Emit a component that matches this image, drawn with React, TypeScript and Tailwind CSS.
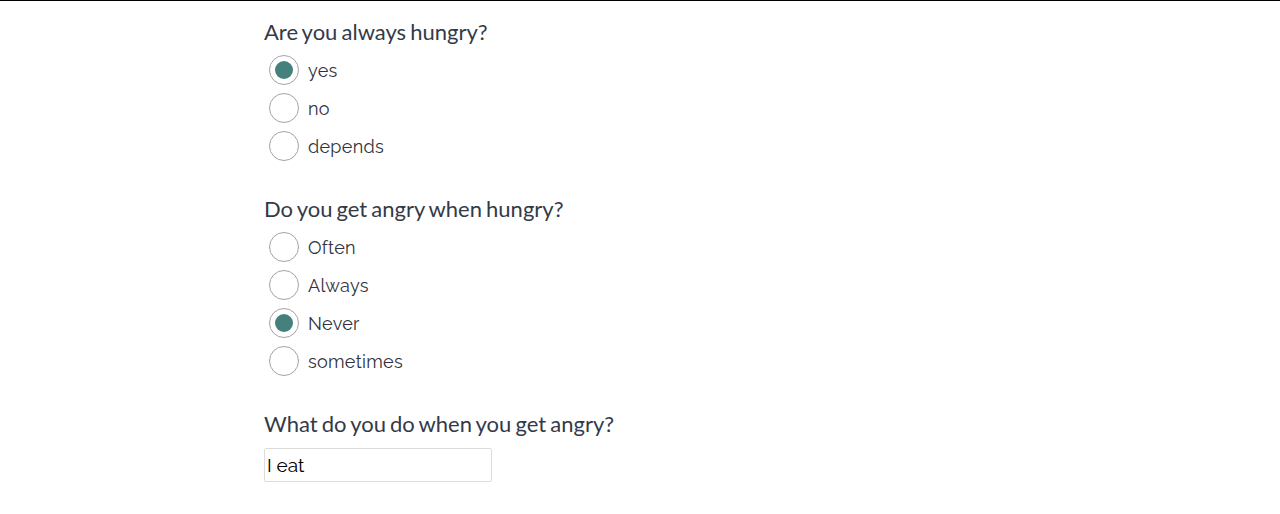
import React, { useState } from 'react';

type Question = {
  id: string;
  title: string;
  options: string[];
  initial: string;
};

const questions: Question[] = [
  { id: 'hungry', title: 'Are you always hungry?', options: ['yes', 'no', 'depends'], initial: 'yes' },
  { id: 'angry', title: 'Do you get angry when hungry?', options: ['Often', 'Always', 'Never', 'sometimes'], initial: 'Never' },
];

const Radio: React.FC<{ label: string; checked: boolean; onSelect: () => void }> = ({ label, checked, onSelect }) => (
  <label className="flex items-center h-[30px] cursor-pointer" onClick={onSelect}>
    <span className="ml-[5px] w-[30px] h-[30px] rounded-full border border-[#a3a3a3] bg-white flex items-center justify-center">
      {checked && <span className="w-[18px] h-[18px] rounded-full bg-[#46807c]" />}
    </span>
    <span className="ml-[9px] text-[18px] text-[#2f3340] font-['Raleway','Lato',sans-serif] tracking-[0.3px]">{label}</span>
  </label>
);

const heading = "text-[22px] leading-[30px] text-[#333a47] [word-spacing:-1.5px]";

export default function App() {
  const [answers, setAnswers] = useState<Record<string, string>>(
    Object.fromEntries(questions.map((q) => [q.id, q.initial]))
  );
  const [text, setText] = useState('I eat');

  return (
    <div className="min-h-[514px] bg-white border-t border-black">
      <div className="pl-[264px] pt-[16px] font-['Lato',sans-serif]">
        {questions.map((q) => (
          <div key={q.id} className="mb-[33px]">
            <h2 className={heading}>{q.title}</h2>
            <div className="mt-2 flex flex-col gap-2">
              {q.options.map((opt) => (
                <Radio
                  key={opt}
                  label={opt}
                  checked={answers[q.id] === opt}
                  onSelect={() => setAnswers({ ...answers, [q.id]: opt })}
                />
              ))}
            </div>
          </div>
        ))}
        <h2 className={heading}>What do you do when you get angry?</h2>
        <input
          value={text}
          onChange={(e) => setText(e.target.value)}
          className="mt-[9px] w-[228px] h-[34px] border border-[#dcdcdc] rounded-[2px] px-[2px] text-[19px] text-black font-['Raleway','Lato',sans-serif] outline-none"
        />
      </div>
    </div>
  );
}
